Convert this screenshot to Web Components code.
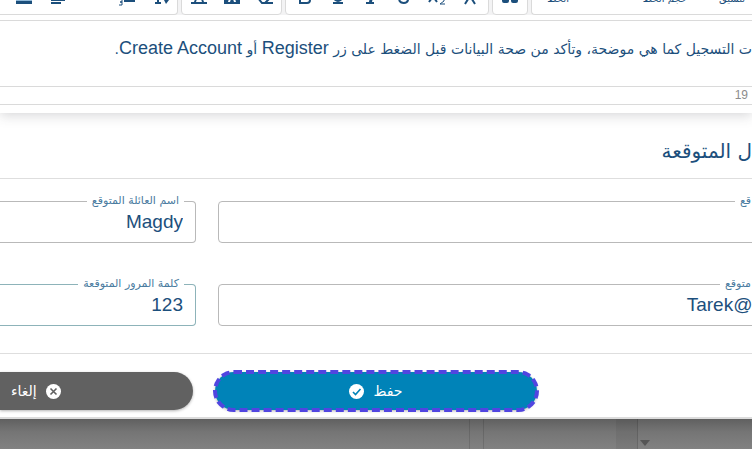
<!DOCTYPE html>
<html lang="ar">
<head>
<meta charset="utf-8">
<title>تعديل</title>
<style>
    body { margin: 0; overflow: hidden; background: #828282; color: #1c4f7c; font-family: "Liberation Sans", "DejaVu Sans", sans-serif; }
</style>
</head>
<body>
<edit-dialog>
    <editor-toolbar slot="editor"></editor-toolbar>
    <editor-body slot="editor" count="19">ت التسجيل كما هي موضحة، وتأكد من صحة البيانات قبل الضغط على زر <bdi>Register</bdi> أو <bdi>Create Account</bdi>.</editor-body>
    <span slot="title">ل المتوقعة</span>
    <outlined-field slot="fields" label="اسم العائلة المتوقع" value="Magdy"></outlined-field>
    <outlined-field slot="fields" class="cut" label="قع" value=""></outlined-field>
    <outlined-field slot="fields" class="active" label="كلمة المرور المتوقعة" value="123"></outlined-field>
    <outlined-field slot="fields" class="cut" label="متوقع" value="Tarek@g"></outlined-field>
    <pill-button slot="actions" kind="cancel">إلغاء</pill-button>
    <pill-button slot="actions" kind="save">حفظ</pill-button>
</edit-dialog>
<page-backdrop></page-backdrop>

<script>
/**
 * <editor-toolbar>
 * Rich text toolbar, scrolled so that only its lower edge shows.
 */
const ICONS = {
    image: '<path d="M2 5h16v10H2z" fill="#8fb8d8"/><path d="M2 15h16v3H2z"/>',
    align: '<path d="M3 16h10v2H3zM3 13h14v2H3zM3 10h9v2H3z"/>',
    gap: '',
    list: '<path d="M8 14h11v2H8zM8 8h11v2H8z"/><path d="M3 13h3v3H4h2v3H3" fill="none" stroke="#1c4f7c"/>',
    height: '<path d="M2 4h11v3H9v9h2v2H5v-2h2V7H2zM16 4l3 4h-2v6h2l-3 4-2-4h1V8h-1z"/>',
    color: '<path d="M5 16 9 5h2l4 11h-2l-3-9-3 9zM2 16h16v2H2z"/>',
    fill: '<path d="M2 3h16v15H2zM6 16h2l1-3h2l1 3h2L11 6H9z" fill-rule="evenodd"/>',
    eraser: '<path d="M3 12 11 4l6 6-7 7H7zM9 17h9" fill="none" stroke="#1c4f7c" stroke-width="2"/>',
    bold: '<path d="M5 4h6a3 3 0 0 1 0 7H6h6a3 3 0 0 1 0 6H5z" fill="none" stroke="#1c4f7c" stroke-width="2"/>',
    underline: '<path d="M6 4v7a4 4 0 0 0 8 0V4" fill="none" stroke="#1c4f7c" stroke-width="2"/><path d="M5 16h10v2H5z"/>',
    italic: '<path d="M8 4h7v2h-2l-2 10h2v2H5v-2h3l2-10H8z"/>',
    strike: '<path d="M14 6c-2-3-9-2-8 2 1 3 9 2 8 6-1 4-7 4-9 0" fill="none" stroke="#1c4f7c" stroke-width="2"/>',
    sub: '<path d="m2 5 8 11M10 5 2 16" fill="none" stroke="#1c4f7c" stroke-width="2"/><path d="M13 13h4v2l-4 3h5" fill="none" stroke="#1c4f7c"/>',
    sup: '<path d="m5 18 5-8 5 8M5 4l5 6 5-6" fill="none" stroke="#1c4f7c" stroke-width="2"/>',
    quote: '<path d="M2 8h7v7a2 2 0 0 1-2 2H4a2 2 0 0 1-2-2zM11 8h7v7a2 2 0 0 1-2 2h-3a2 2 0 0 1-2-2z"/>'
};

class EditorToolbar extends HTMLElement {
    constructor() {
        super();
        this.attachShadow({ mode: 'open' });
        const group = (names, type = '') => `<div class="group ${type}">${names.map(n => n === 'gap'
            ? '<i></i>'
            : `<button type="button" aria-label="${n}"><svg viewBox="0 0 20 24" width="20" height="24" fill="#1c4f7c">${ICONS[n]}</svg></button>`).join('')}</div>`;
        this.shadowRoot.innerHTML = `
            <style>
                :host { display: flex; gap: 3px; height: 15px; align-items: flex-end; overflow: hidden; background: #f3f3f4; border-bottom: 5px solid #fff; }
                .group { display: flex; flex: none; align-items: flex-start; height: 30px; box-sizing: border-box; background: #fff; border: 1px solid #dadada; border-radius: 4px; }
                .blocks { border-left: 0; border-radius: 0 4px 4px 0; padding-left: 7px; }
                .marks { padding: 0 2px; }
                .formats { flex: 1; border-right: 0; border-radius: 4px 0 0 4px; padding: 0 7px 0 15px; justify-content: space-between; }
                button { display: grid; place-items: center; width: 34px; height: 24px; padding: 0; border: 0; background: none; }
                i { width: 34px; }
                .colors button, .marks button { width: 33px; }
                select { appearance: none; border: 0; padding: 0; height: 24px; background: none; color: inherit; font: 10px "DejaVu Sans", sans-serif; direction: rtl; }
                select:first-child { margin-right: 42px; }
            </style>
            ${group(['image', 'align', 'gap', 'list', 'height'], 'blocks')}
            ${group(['color', 'fill', 'eraser'], 'colors')}
            ${group(['bold', 'underline', 'italic', 'strike', 'sub', 'sup'], 'marks')}
            ${group(['quote'])}
            <div class="group formats">
                <select aria-label="الخط"><option>الخط</option></select>
                <select aria-label="حجم الخط"><option>حجم الخط</option></select>
                <select aria-label="تنسيق"><option>تنسيق</option></select>
            </div>
        `;
    }
}

/**
 * <editor-body>
 * Text area of the editor with its counter line.
 */
class EditorBody extends HTMLElement {
    constructor() {
        super();
        this.attachShadow({ mode: 'open' });
        this.shadowRoot.innerHTML = `
            <style>
                :host { display: block; border-top: 1px solid #dadada; border-bottom: 1px solid #dadada; }
                .text { direction: rtl; height: 65px; box-sizing: border-box; padding-top: 14px; font: 14px/26px "DejaVu Sans", sans-serif; white-space: nowrap; }
                ::slotted(bdi) { font: 18px/26px "Liberation Sans", sans-serif; }
                .status { padding: 0 4px; border-top: 1px solid #dadada; font: 12px/17px "Liberation Sans", sans-serif; color: #8c8c8c; text-align: right; }
            </style>
            <div class="text"><slot></slot></div>
            <div class="status">${this.getAttribute('count')}</div>
        `;
    }
}

/**
 * <outlined-field>
 * Text box with its label set into the top border.
 */
class OutlinedField extends HTMLElement {
    constructor() {
        super();
        this.attachShadow({ mode: 'open' });
        this.shadowRoot.innerHTML = `
            <style>
                :host { display: block; position: relative; --line: #b9b9b9; }
                :host(.active) { --line: #8db3b9; }
                :host(.cut) { margin-right: -12px; }
                label { position: absolute; top: -8px; right: 12px; padding: 0 5px; background: #fff; color: #4a7ba0; font: 11px/16px "DejaVu Sans", sans-serif; direction: rtl; white-space: nowrap; }
                :host(.cut) label { right: 8px; }
                input { display: block; width: 100%; height: 42px; box-sizing: border-box; padding: 0 12px; border: 1px solid var(--line); border-left: 0; border-radius: 0 4px 4px 0; background: #fff; color: #1c4f7c; font: 19px "Liberation Sans", sans-serif; text-align: right; outline: 0; }
                :host(.cut) input { border-left: 1px solid var(--line); border-radius: 4px; padding: 0; }
            </style>
            <label for="box">${this.getAttribute('label')}</label>
            <input id="box" type="text" value="${this.getAttribute('value')}">
        `;
    }
}

/**
 * <pill-button>
 * Rounded action button, either save or cancel.
 */
class PillButton extends HTMLElement {
    constructor() {
        super();
        this.attachShadow({ mode: 'open' });
        const save = this.getAttribute('kind') === 'save';
        const mark = save
            ? '<path d="m4 8 2.5 2.5L11.500 5" stroke="#0083b8"/>'
            : '<path d="m4.500 4.500 6 6M10.500 4.500l-6 6" stroke="#616161"/>';
        this.shadowRoot.innerHTML = `
            <style>
                :host { display: block; }
                button { display: flex; align-items: center; width: 100%; height: 38px; border: 0; color: #fff; font: 14px "DejaVu Sans", sans-serif; box-shadow: 0 1px 3px rgba(0, 0, 0, 0.3); }
                .save { justify-content: center; gap: 9px; padding: 0; background: #0083b8; border-radius: 19px; outline: 4px dashed #5145e0; outline-offset: -2px; }
                .cancel { flex-direction: row-reverse; justify-content: flex-end; gap: 9px; padding: 0 11px; background: #616161; border-radius: 0 19px 19px 0; }
            </style>
            <button type="button" class="${save ? 'save' : 'cancel'}">
                <svg width="15" height="15" viewBox="0 0 15 15" fill="none" stroke-width="1.6"><circle cx="7.5" cy="7.5" r="7.5" fill="#fff"/>${mark}</svg>
                <span><slot></slot></span>
            </button>
        `;
    }
}

/**
 * <edit-dialog>
 * White dialog: editor card, section title, fields and actions.
 */
class EditDialog extends HTMLElement {
    constructor() {
        super();
        this.attachShadow({ mode: 'open' });
        this.shadowRoot.innerHTML = `
            <style>
                :host { display: block; background: #fff; border-bottom: 2px solid #dcdcdc; overflow: hidden; }
                .card { padding-bottom: 8px; box-shadow: 0 2px 12px rgba(60, 60, 70, 0.22); }
                h2 { margin: 0; padding: 24px 0 13px; border-bottom: 1px solid #dedede; direction: rtl; font: 20px/28px "DejaVu Sans", sans-serif; }
                .fields { display: grid; grid-template-columns: 196fr 534fr; gap: 41px 22px; padding: 22px 0 27px; border-bottom: 1px solid #dedede; }
                .actions { display: grid; grid-template-columns: 3fr 5fr 3fr; gap: 22px; padding: 18px 0 7px; }
            </style>
            <div class="card"><slot name="editor"></slot></div>
            <h2><slot name="title"></slot></h2>
            <div class="fields"><slot name="fields"></slot></div>
            <div class="actions"><slot name="actions"></slot></div>
        `;
    }
}

/**
 * <page-backdrop>
 * Dimmed strip of the page under the dialog.
 */
class PageBackdrop extends HTMLElement {
    constructor() {
        super();
        this.attachShadow({ mode: 'open' });
        this.shadowRoot.innerHTML = `
            <style>
                :host { display: grid; grid-template-columns: 470fr 14fr 132fr 22fr 114fr; height: 32px; background: linear-gradient(#606060, #757575 40%, #838383); }
                div { border-right: 1px solid rgba(0, 0, 0, 0.12); }
                .dark { background: rgba(0, 0, 0, 0.05); }
                .open { border: 0; }
                .last { border: 0; padding: 21px 2px 0; }
                svg { display: block; }
            </style>
            <div></div><div></div><div class="open"></div><div class="dark"></div>
            <div class="last"><svg width="10" height="6" fill="#555"><path d="M0 0h10L5 6z"/></svg></div>
        `;
    }
}

customElements.define('editor-toolbar', EditorToolbar);
customElements.define('editor-body', EditorBody);
customElements.define('outlined-field', OutlinedField);
customElements.define('pill-button', PillButton);
customElements.define('edit-dialog', EditDialog);
customElements.define('page-backdrop', PageBackdrop);
</script>
</body>
</html>
